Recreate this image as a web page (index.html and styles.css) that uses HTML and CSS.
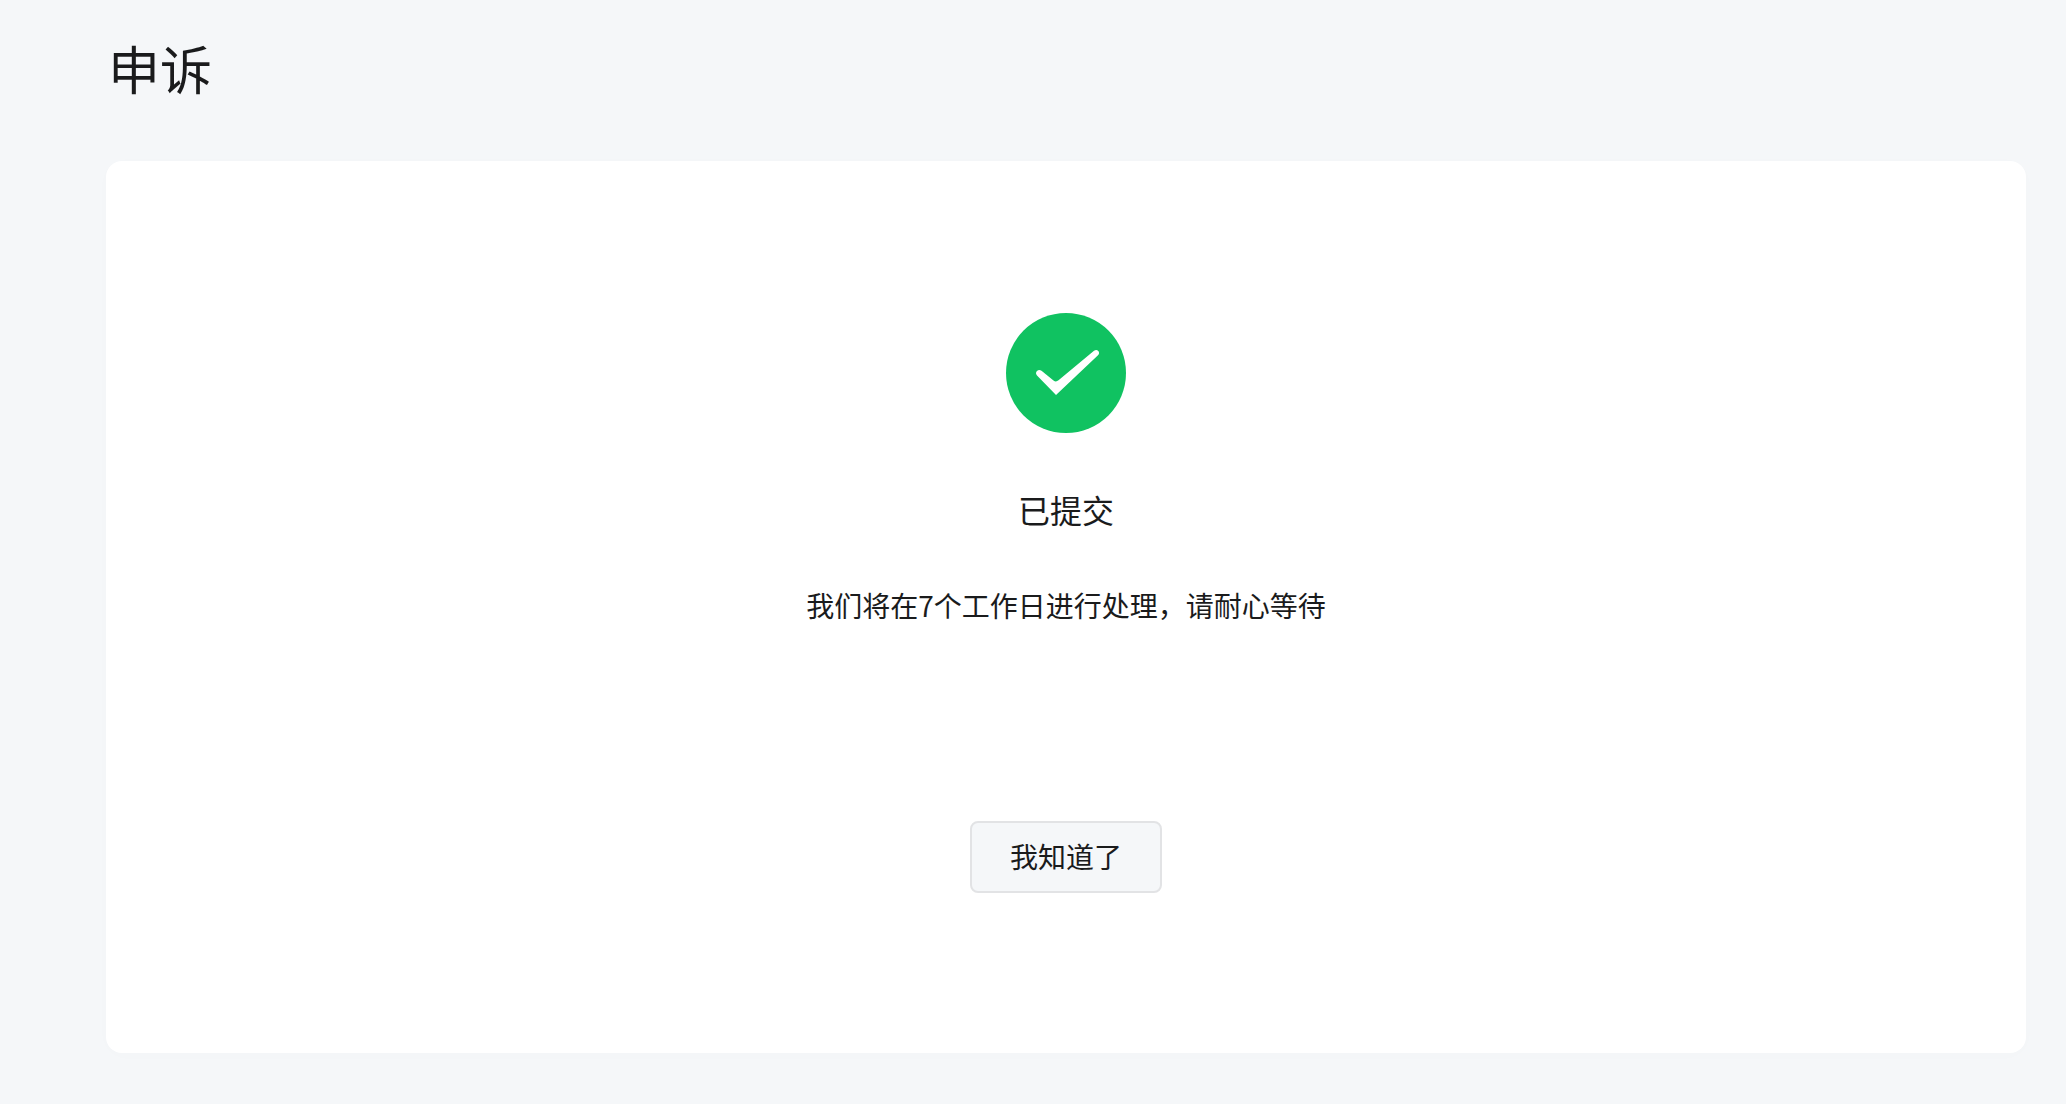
FILE: index.html
```html
<!DOCTYPE html>
<html lang="zh-CN">
<head>
    <meta charset="UTF-8">
    <meta name="viewport" content="width=device-width, initial-scale=1.0">
    <title>申诉</title>
    <link rel="stylesheet" href="styles.css">
</head>
<body>
    <main class="page">
        <h1 class="page-title">申诉</h1>
        <section class="card">
            <svg class="icon-success" viewBox="0 0 120 120" aria-hidden="true">
                <circle cx="60" cy="60" r="60" fill="#10c261"/>
                <path d="M31 62.5Q29 60 31 58Q33 56 35.500 57.700L47.500 67.500Q50 69.500 52.500 67.300L88 37.700Q90.500 36 92.300 38Q94 40.200 92 42.300L50 82Z" fill="#fff"/>
            </svg>
            <h2 class="result-title">已提交</h2>
            <p class="result-desc">我们将在7个工作日进行处理，请耐心等待</p>
            <button class="btn" type="button">我知道了</button>
        </section>
    </main>
</body>
</html>
```

FILE: styles.css
```css
* {
    box-sizing: border-box;
}
body {
    margin: 0;
    min-height: 100vh;
    background: #f5f7f9;
    color: #1a1b1c;
    font-family: "Noto Sans CJK SC", sans-serif;
}
.page {
    padding: 32px 40px 48px 106px;
}
.page-title {
    margin: 0 0 57px;
    padding-left: 2px;
    font-size: 52px;
    line-height: 72px;
    font-weight: 400;
}
.card {
    display: flex;
    flex-direction: column;
    align-items: center;
    padding: 152px 40px 160px;
    background: #fff;
    border-radius: 16px;
    box-shadow: 0 2px 20px rgba(0, 0, 0, 0.01);
}
.icon-success {
    width: 120px;
    height: 120px;
}
.result-title {
    margin: 52px 0 0;
    font-size: 32px;
    line-height: 48px;
    font-weight: 400;
}
.result-desc {
    margin: 52px 0 0;
    font-size: 28px;
    line-height: 40px;
    font-weight: 400;
}
.btn {
    margin-top: 196px;
    min-width: 192px;
    height: 72px;
    padding: 0 38px 2px;
    border: 2px solid #e2e3e5;
    border-radius: 8px;
    background: #f5f7f9;
    color: inherit;
    font-family: inherit;
    font-size: 28px;
    line-height: 40px;
    cursor: pointer;
}
.btn:hover {
    background: #eceef1;
}
```
